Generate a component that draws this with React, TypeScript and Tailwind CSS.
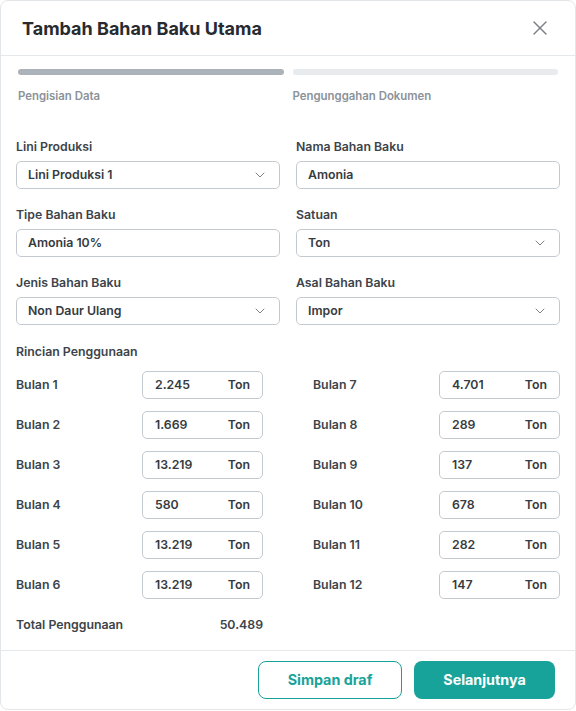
import { X, ChevronDown } from 'lucide-react';

const left = [
  { label: 'Bulan 1', value: '2.245' },
  { label: 'Bulan 2', value: '1.669' },
  { label: 'Bulan 3', value: '13.219' },
  { label: 'Bulan 4', value: '580' },
  { label: 'Bulan 5', value: '13.219' },
  { label: 'Bulan 6', value: '13.219' },
];

const right = [
  { label: 'Bulan 7', value: '4.701' },
  { label: 'Bulan 8', value: '289' },
  { label: 'Bulan 9', value: '137' },
  { label: 'Bulan 10', value: '678' },
  { label: 'Bulan 11', value: '282' },
  { label: 'Bulan 12', value: '147' },
];

function Field({ label, value, select }: { label: string; value: string; select?: boolean }) {
  return (
    <div className="flex flex-col">
      <label className="mb-[6px] text-[12.3px] leading-4 font-semibold text-[#3d434a]">{label}</label>
      <div className="flex h-[28px] items-center justify-between rounded-[5px] border border-[#c5cad0] pr-[11px] pl-[11px]">
        <span className="text-[12.3px] font-semibold text-[#363b41]">{value}</span>
        {select && <ChevronDown className="size-[16px] text-[#7c8389]" strokeWidth={1.5} />}
      </div>
    </div>
  );
}

function MonthRow({ label, value }: { label: string; value: string }) {
  return (
    <div className="flex items-center justify-between">
      <span className="text-[12.3px] font-semibold text-[#3d434a]">{label}</span>
      <div className="flex h-[28px] w-[121px] items-center justify-between rounded-[5px] border border-[#c5cad0] px-3 text-[12.3px] font-semibold text-[#363b41]">
        <span>{value}</span>
        <span>Ton</span>
      </div>
    </div>
  );
}

export default function App() {
  return (
    <div className="bg-white" style={{ fontFamily: 'Inter, "Liberation Sans", sans-serif' }}>
      <div className="flex h-[710px] w-[576px] flex-col rounded-[8px] border border-[#e3e6e9] bg-white">
        {/* Header */}
        <div className="flex h-[55px] shrink-0 items-center justify-between border-b border-[#e6e9ec] pr-[23px] pl-[21px]">
          <h2 className="text-[18px] font-bold text-[#272b30]">Tambah Bahan Baku Utama</h2>
          <X className="size-[24px] text-[#7b8187]" strokeWidth={1.5} />
        </div>

        {/* Steps */}
        <div className="grid grid-cols-2 gap-x-[9px] px-[17px] pt-[13px]">
          <div className="h-[6px] rounded-full bg-[#abb2b9]" />
          <div className="h-[6px] rounded-full bg-[#e8ebee]" />
          <span className="mt-[13px] text-[11.4px] leading-4 font-semibold text-[#8b9299]">Pengisian Data</span>
          <span className="mt-[13px] text-[11.4px] leading-4 font-semibold text-[#8b9299]">Pengunggahan Dokumen</span>
        </div>

        {/* Form */}
        <div className="grid grid-cols-2 gap-x-4 gap-y-[18px] px-[15px] pt-[35px]">
          <Field label="Lini Produksi" value="Lini Produksi 1" select />
          <Field label="Nama Bahan Baku" value="Amonia" />
          <Field label="Tipe Bahan Baku" value="Amonia 10%" />
          <Field label="Satuan" value="Ton" select />
          <Field label="Jenis Bahan Baku" value="Non Daur Ulang" select />
          <Field label="Asal Bahan Baku" value="Impor" select />
        </div>

        <div className="px-[15px] pt-[19px]">
          <div className="text-[12.3px] leading-4 font-semibold text-[#3d434a]">Rincian Penggunaan</div>
          <div className="mt-[11px] grid grid-cols-2 gap-x-[50px]">
            <div className="flex flex-col gap-3">
              {left.map((m) => (
                <MonthRow key={m.label} {...m} />
              ))}
            </div>
            <div className="flex flex-col gap-3">
              {right.map((m) => (
                <MonthRow key={m.label} {...m} />
              ))}
            </div>
          </div>
          <div className="mt-[18px] flex w-[247px] items-center justify-between text-[12.3px] leading-4 font-semibold text-[#3d434a]">
            <span>Total Penggunaan</span>
            <span>50.489</span>
          </div>
        </div>

        {/* Footer */}
        <div className="mt-auto flex justify-end gap-3 border-t border-[#e6e9ec] pt-[10px] pr-5 pb-[10px]">
          <button className="h-[38px] w-[144px] rounded-[8px] border border-[#18a39a] bg-white text-[14.3px] font-bold text-[#18a39a]">
            Simpan draf
          </button>
          <button className="h-[38px] w-[141px] rounded-[8px] bg-[#18a39a] text-[14.3px] font-bold text-white">
            Selanjutnya
          </button>
        </div>
      </div>
    </div>
  );
}
